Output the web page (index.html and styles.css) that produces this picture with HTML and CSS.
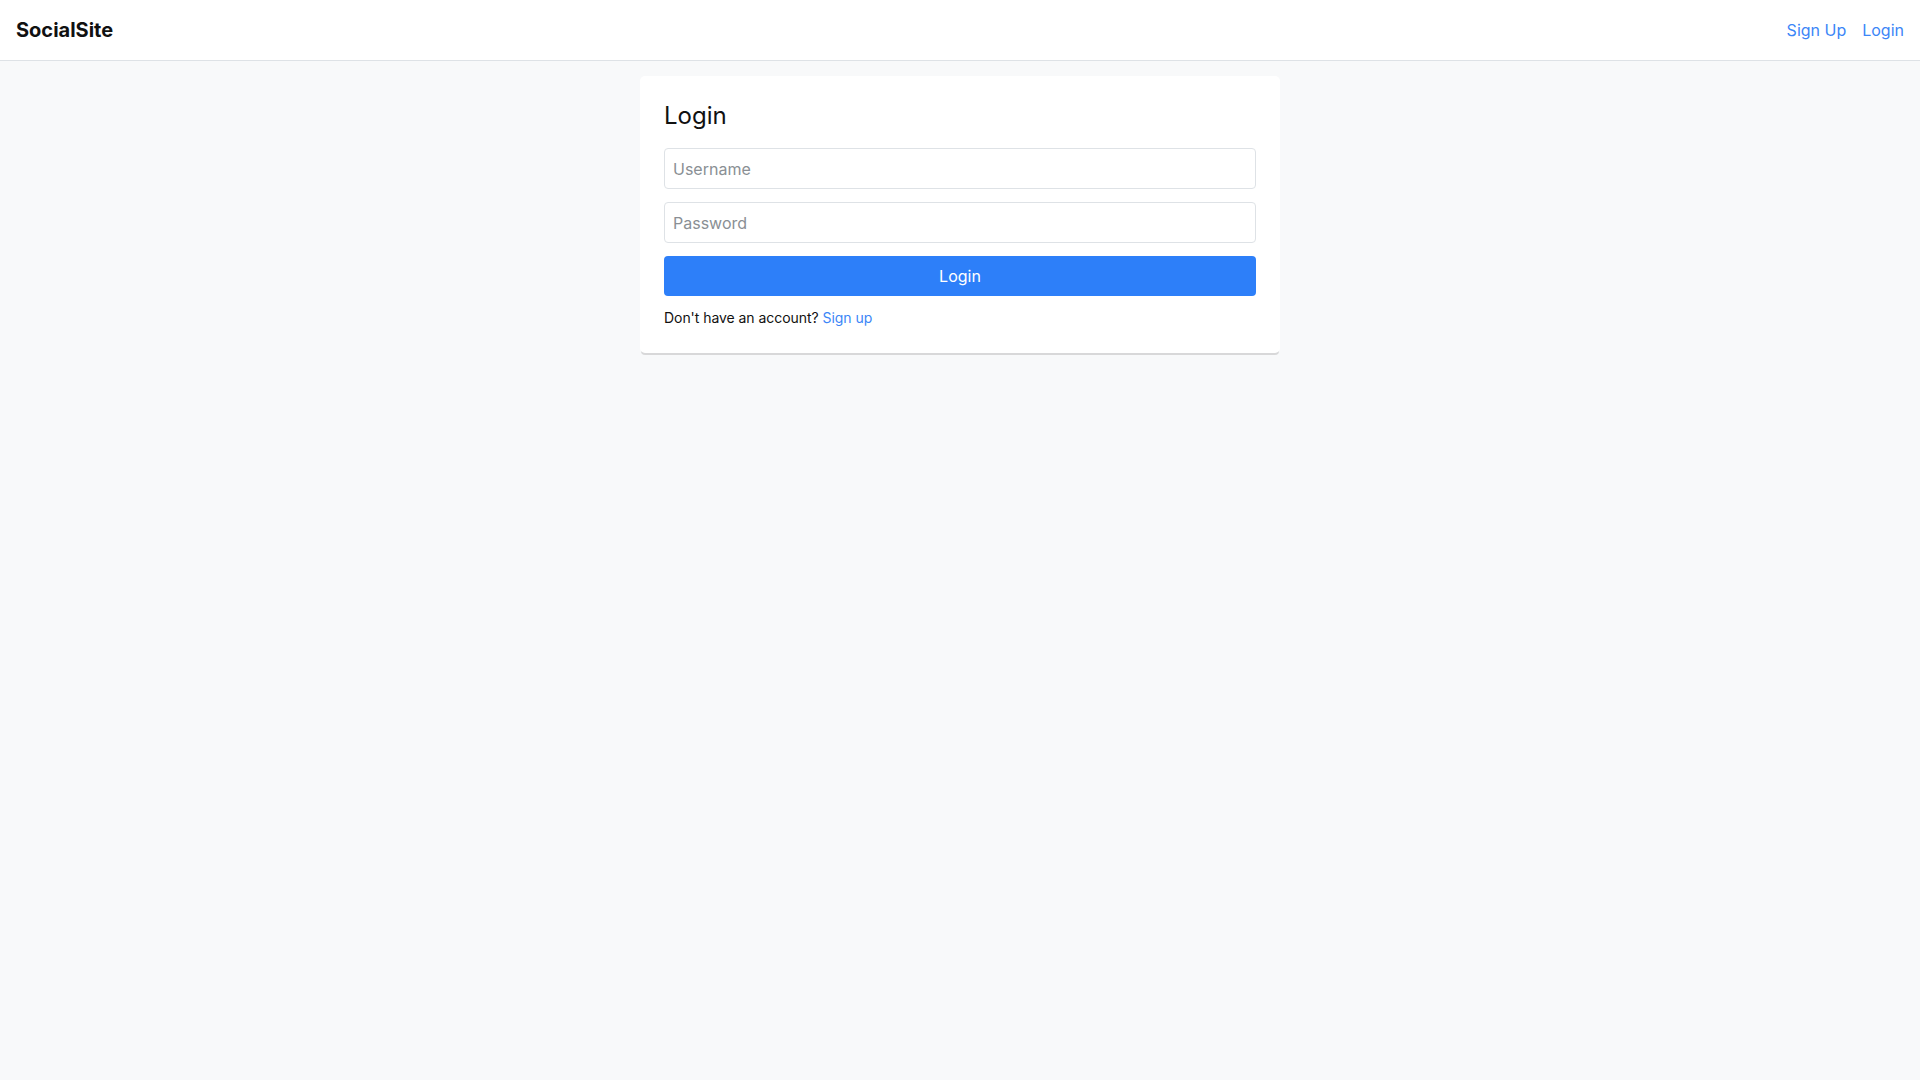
FILE: index.html
```html
<!DOCTYPE html>
<html lang="en">
<head>
<meta charset="utf-8">
<title>SocialSite - Login</title>
<link rel="stylesheet" href="styles.css">
</head>
<body>
<header class="navbar">
  <a class="brand" href="#">SocialSite</a>
  <nav class="nav-links">
    <a href="#">Sign Up</a>
    <a href="#">Login</a>
  </nav>
</header>
<main class="main">
  <section class="card">
    <h1 class="card-title">Login</h1>
    <form class="login-form">
      <input class="field" type="text" placeholder="Username">
      <input class="field" type="password" placeholder="Password">
      <button class="btn-primary" type="button">Login</button>
    </form>
    <p class="signup-note">Don't have an account? <a href="#">Sign up</a></p>
  </section>
</main>
</body>
</html>
```
FILE: styles.css
```css
* { box-sizing: border-box; }
html, body { margin: 0; padding: 0; }
body {
  font-family: Inter, "Noto Sans", "Liberation Sans", sans-serif;
  background: #f8f9fa;
  color: #212529;
  min-height: 100vh;
}
a { text-decoration: none; color: #2d7ff9; }
.navbar {
  height: 61px;
  background: #ffffff;
  border-bottom: 1px solid #dee2e6;
  display: flex;
  align-items: center;
  justify-content: space-between;
  padding: 0 16px;
}
.brand {
  font-size: 20px;
  font-weight: 700;
  color: #111111;
}
.nav-links {
  display: flex;
  gap: 16px;
  font-size: 16px;
}
.nav-links a { color: #3b86f7; }
.main {
  display: flex;
  justify-content: center;
  padding-top: 15px;
}
.card {
  width: 640px;
  background: #ffffff;
  border-radius: 5px;
  padding: 24px 24px 25px;
  box-shadow: 0 3px 0 -1px rgba(0, 0, 0, 0.13);
}
.card-title {
  margin: 0 0 17px;
  padding-top: 1px;
  font-size: 24px;
  font-weight: 400;
  line-height: 30px;
  color: #111111;
}
.login-form {
  display: flex;
  flex-direction: column;
  gap: 13px;
}
.field {
  display: block;
  width: 100%;
  height: 41px;
  padding: 0 8px;
  border: 1px solid #dee2e6;
  border-radius: 4px;
  font-family: inherit;
  font-size: 16px;
  color: #212529;
  background: #ffffff;
  outline: none;
}
.field::placeholder { color: #8a8f94; }
.btn-primary {
  height: 40px;
  width: 100%;
  border: none;
  border-radius: 4px;
  background: #2d7ff9;
  color: #ffffff;
  font-family: inherit;
  font-size: 16px;
  cursor: pointer;
}
.signup-note {
  margin: 11px 0 0;
  font-size: 14px;
  line-height: 21px;
  letter-spacing: -0.05px;
  color: #111111;
}
.signup-note a { color: #3b86f7; }
```
